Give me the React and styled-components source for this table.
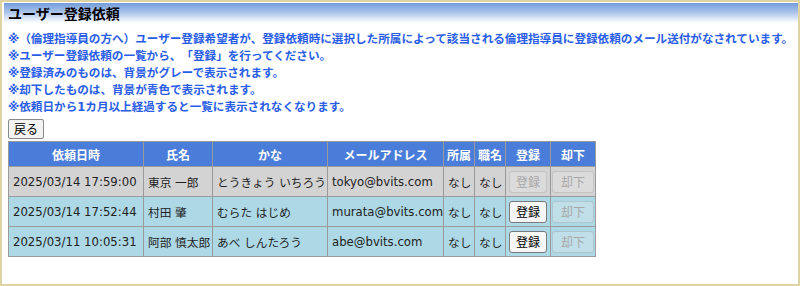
import styled, { createGlobalStyle } from 'styled-components';

const GlobalStyle = createGlobalStyle`
  html, body {
    margin: 0;
    padding: 0;
    background: #ffffff;
  }
  body {
    font-family: "DejaVu Sans", "Noto Sans CJK JP", sans-serif;
    text-spacing-trim: space-all;
  }
`

const Frame = styled.div`
  width: 800px;
  height: 286px;
  box-sizing: border-box;
  border: 2px solid #dfd3a4;
  padding: 1px 0 0 2px;
  background: #fff;
  overflow: hidden;
`

const HeaderBar = styled.div`
  height: 20px;
  padding-left: 4px;
  background: linear-gradient(to bottom, #739cdb 0%, #a9c3ea 45%, #ffffff 100%);
`

const Title = styled.h1`
  margin: 0;
  font-family: "Noto Sans CJK JP", sans-serif;
  font-size: 14px;
  font-weight: 700;
  line-height: 20px;
  color: #000;
`

const Content = styled.div`
  padding-left: 4px;
`

const Notes = styled.div`
  margin-top: 8px;
  font-family: "DejaVu Sans", "Noto Sans CJK JP", sans-serif;
  font-size: 11.6px;
  font-weight: 700;
  line-height: 17px;
  color: #2a5de6;
  white-space: nowrap;
`

const BackButton = styled.button`
  display: block;
  margin-top: 3px;
  height: 20px;
  padding: 0 5px;
  font-family: "Noto Sans CJK JP", sans-serif;
  font-size: 12px;
  line-height: 18px;
  color: #000;
  background: #f3f3f3;
  border: 1px solid #8a8a8a;
  border-radius: 2px;
`

const Table = styled.table`
  margin-top: 2px;
  border-collapse: collapse;
  table-layout: fixed;
  width: 587px;
  font-size: 11.7px;
`

const Th = styled.th`
  height: 24px;
  padding: 0;
  background: #4a7dd9;
  color: #fff;
  font-family: "Noto Sans CJK JP", sans-serif;
  font-weight: 700;
  font-size: 12px;
  text-align: center;
  border: 1px solid #9a9a9a;
`

const Td = styled.td`
  height: 29px;
  padding: 0 ${p => (p.$center ? 0 : 4)}px;
  background: ${p => (p.$done ? '#d3d3d3' : '#add8e6')};
  color: #222;
  text-align: ${p => (p.$center ? 'center' : 'left')};
  white-space: nowrap;
  border: 1px solid #9a9a9a;
`

const CellButton = styled.button`
  height: 22px;
  padding: 0 ${p => (p.$wide ? 8 : 6)}px;
  font-family: "Noto Sans CJK JP", sans-serif;
  font-size: 12px;
  line-height: 20px;
  border-radius: 3px;
  color: ${p => (p.disabled ? '#a8a8a8' : '#000')};
  background: ${p => (p.disabled ? 'rgba(239,239,239,0.3)' : '#f7f7f7')};
  border: 1px solid ${p => (p.disabled ? 'rgba(118,118,118,0.25)' : '#7a7a7a')};
`

const columns = [
  { label: '依頼日時', width: 135 },
  { label: '氏名', width: 69 },
  { label: 'かな', width: 115 },
  { label: 'メールアドレス', width: 116 },
  { label: '所属', width: 31 },
  { label: '職名', width: 31 },
  { label: '登録', width: 45 },
  { label: '却下', width: 45 },
]

const rows = [
  { date: '2025/03/14 17:59:00', name: '東京 一郎', kana: 'とうきょう いちろう', mail: 'tokyo@bvits.com', done: true },
  { date: '2025/03/14 17:52:44', name: '村田 肇', kana: 'むらた はじめ', mail: 'murata@bvits.com', done: false },
  { date: '2025/03/11 10:05:31', name: '阿部 慎太郎', kana: 'あべ しんたろう', mail: 'abe@bvits.com', done: false },
]

const notes = [
  '※（倫理指導員の方へ）ユーザー登録希望者が、登録依頼時に選択した所属によって該当される倫理指導員に登録依頼のメール送付がなされています。',
  '※ユーザー登録依頼の一覧から、「登録」を行ってください。',
  '※登録済みのものは、背景がグレーで表示されます。',
  '※却下したものは、背景が青色で表示されます。',
  '※依頼日から1カ月以上経過すると一覧に表示されなくなります。',
]

export default function App() {
  return (
    <>
      <GlobalStyle />
      <Frame>
        <HeaderBar>
          <Title>ユーザー登録依頼</Title>
        </HeaderBar>
        <Content>
          <Notes>
            {notes.map(n => <div key={n}>{n}</div>)}
          </Notes>
          <BackButton>戻る</BackButton>
          <Table>
            <colgroup>
              {columns.map(c => <col key={c.label} style={{ width: c.width }} />)}
            </colgroup>
            <thead>
              <tr>
                {columns.map(c => <Th key={c.label}>{c.label}</Th>)}
              </tr>
            </thead>
            <tbody>
              {rows.map(r => (
                <tr key={r.mail}>
                  <Td $done={r.done}>{r.date}</Td>
                  <Td $done={r.done}>{r.name}</Td>
                  <Td $done={r.done}>{r.kana}</Td>
                  <Td $done={r.done}>{r.mail}</Td>
                  <Td $done={r.done}>なし</Td>
                  <Td $done={r.done}>なし</Td>
                  <Td $done={r.done} $center><CellButton disabled={r.done}>登録</CellButton></Td>
                  <Td $done={r.done} $center><CellButton disabled $wide>却下</CellButton></Td>
                </tr>
              ))}
            </tbody>
          </Table>
        </Content>
      </Frame>
    </>
  )
}
